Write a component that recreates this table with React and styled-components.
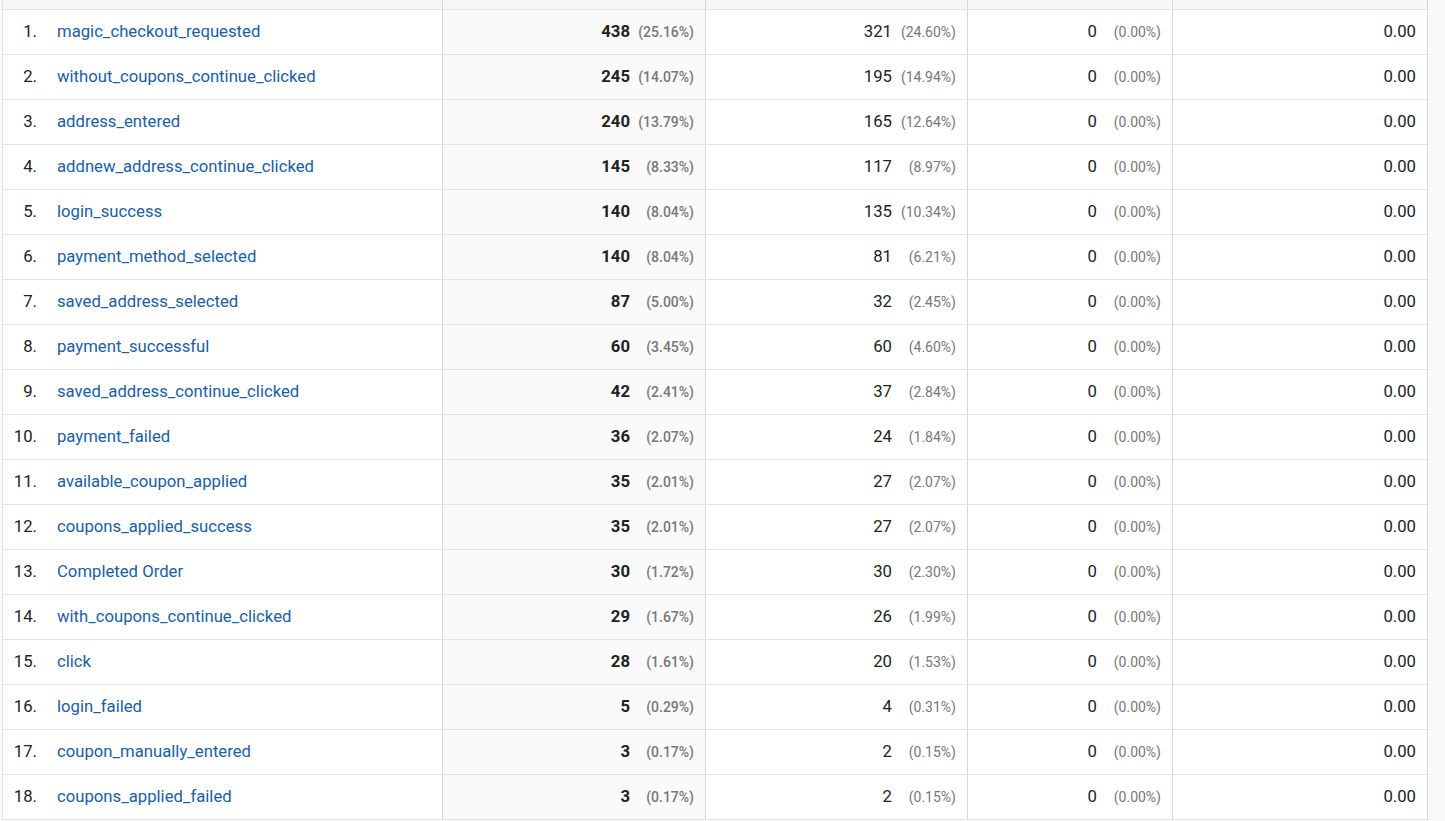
import React from "react";
import styled, { createGlobalStyle } from "styled-components";

const COLORS = {
    page: "#f8f9fa",
    header: "#f7f7f7",
    line: "#e3e3e3",
    divider: "#d6d6d6",
    sorted: "#fafafa",
    text: "#202124",
    link: "#1a5ea3",
    muted: "#777777",
};

const ROWS = [
    ["magic_checkout_requested", 438, "25.16", 321, "24.60"],
    ["without_coupons_continue_clicked", 245, "14.07", 195, "14.94"],
    ["address_entered", 240, "13.79", 165, "12.64"],
    ["addnew_address_continue_clicked", 145, "8.33", 117, "8.97"],
    ["login_success", 140, "8.04", 135, "10.34"],
    ["payment_method_selected", 140, "8.04", 81, "6.21"],
    ["saved_address_selected", 87, "5.00", 32, "2.45"],
    ["payment_successful", 60, "3.45", 60, "4.60"],
    ["saved_address_continue_clicked", 42, "2.41", 37, "2.84"],
    ["payment_failed", 36, "2.07", 24, "1.84"],
    ["available_coupon_applied", 35, "2.01", 27, "2.07"],
    ["coupons_applied_success", 35, "2.01", 27, "2.07"],
    ["Completed Order", 30, "1.72", 30, "2.30"],
    ["with_coupons_continue_clicked", 29, "1.67", 26, "1.99"],
    ["click", 28, "1.61", 20, "1.53"],
    ["login_failed", 5, "0.29", 4, "0.31"],
    ["coupon_manually_entered", 3, "0.17", 2, "0.15"],
    ["coupons_applied_failed", 3, "0.17", 2, "0.15"],
];

const GlobalStyle = createGlobalStyle`
    body {
        margin: 0;
        background: ${COLORS.page};
        font-family: Roboto, "Liberation Sans", Arial, sans-serif;
        color: ${COLORS.text};
    }
`;

const App = () => {
    return (
        <>
            <GlobalStyle />
            <Page>
                <Table>
                    <HeaderRow>
                        <HeaderCell />
                        <HeaderCell />
                        <HeaderCell />
                        <HeaderCell />
                        <HeaderCell />
                    </HeaderRow>
                    {ROWS.map(([name, events, eventsPct, users, usersPct], i) => (
                        <Row key={name}>
                            <NameCell>
                                <Index>{i + 1}.</Index>
                                <EventLink>{name}</EventLink>
                            </NameCell>
                            <MetricCell $sorted>
                                <Value $bold>{events}</Value>
                                <Percent $bold>({eventsPct}%)</Percent>
                            </MetricCell>
                            <MetricCell>
                                <Value>{users}</Value>
                                <Percent>({usersPct}%)</Percent>
                            </MetricCell>
                            <MetricCell>
                                <Value>0</Value>
                                <Percent>(0.00%)</Percent>
                            </MetricCell>
                            <MetricCell>
                                <Value>0.00</Value>
                            </MetricCell>
                        </Row>
                    ))}
                </Table>
            </Page>
        </>
    );
};

const Page = styled.div`
    padding-left: 2px;
`;

const Table = styled.div`
    width: 1426px;
    border-left: 1px solid ${COLORS.line};
    background: #fff;
`;

const columns = `
    display: grid;
    grid-template-columns: 440px 263px 262px 205px 255px;
`;

const HeaderRow = styled.div`
    ${columns}
    height: 9px;
    background: ${COLORS.header};
    border-bottom: 1px solid ${COLORS.line};
`;

const HeaderCell = styled.div`
    border-right: 1px solid ${COLORS.divider};
`;

const Row = styled.div`
    ${columns}
    height: 44px;
    border-bottom: 1px solid ${COLORS.line};
`;

const NameCell = styled.div`
    display: flex;
    align-items: center;
    padding-bottom: 2px;
    border-right: 1px solid ${COLORS.divider};
    font-size: 16.7px;
`;

const Index = styled.span`
    width: 34px;
    text-align: right;
    color: ${COLORS.text};
`;

const EventLink = styled.a`
    margin-left: 20px;
    color: ${COLORS.link};
    text-decoration: none;
    cursor: pointer;
`;

const MetricCell = styled.div`
    display: flex;
    align-items: center;
    justify-content: flex-end;
    padding: 0 11px 2px 0;
    border-right: 1px solid ${COLORS.divider};
    background: ${(p) => (p.$sorted ? COLORS.sorted : "#fff")};
`;

const Value = styled.span`
    font-size: 16.7px;
    font-weight: ${(p) => (p.$bold ? 700 : 400)};
`;

const Percent = styled.span`
    min-width: 58px;
    margin-left: 6px;
    padding-top: 2px;
    text-align: right;
    font-size: 14px;
    color: ${COLORS.muted};
    font-weight: ${(p) => (p.$bold ? 500 : 400)};
`;

export default App;
